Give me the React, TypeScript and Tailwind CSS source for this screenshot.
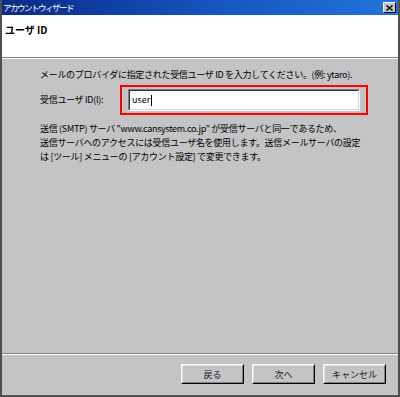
import React from "react";

const font = { fontFamily: '"Noto Sans CJK JP", "Noto Sans", sans-serif' };

function Btn({ label }: { label: string }) {
  return (
    <div className="h-[20px] w-[63px] border border-t-white border-l-white border-r-black border-b-black bg-[#c4c3c5]">
      <div className="flex h-full w-full items-center justify-center border border-t-[#e4e4e4] border-l-[#e4e4e4] border-r-[#808080] border-b-[#808080] text-[9px] leading-none text-[#202020]">
        {label}
      </div>
    </div>
  );
}

export default function App() {
  return (
    <div
      className="flex h-[397px] w-[400px] flex-col overflow-hidden border-l-2 border-r-2 border-b-2 border-l-[#505050] border-r-[#505050] border-b-[#505050] bg-[#c4c3c5]"
      style={font}
    >
      {/* title bar */}
      <div className="flex h-[15px] shrink-0 items-center justify-between bg-gradient-to-r from-[#0a2a86] via-[#1452bc] to-[#2274dc] pl-[1px] pr-[2px]">
        <span className="text-[8.5px] leading-none tracking-[-1.5px] text-white">アカウントウィザード</span>
        <div className="flex h-[11px] w-[13px] items-center justify-center border border-t-white border-l-white border-r-black border-b-black bg-[#c4c3c5]">
          <svg width="7" height="6" viewBox="0 0 7 6">
            <path d="M0.5 0.5 L6.5 5.5 M6.5 0.5 L0.5 5.5" stroke="black" strokeWidth="1.5" />
          </svg>
        </div>
      </div>

      {/* header */}
      <div className="flex h-[42px] shrink-0 items-start bg-white pl-[3px] pt-[10px]">
        <span className="text-[10px] font-bold leading-[10px] text-black">ユーザ ID</span>
      </div>
      <div className="h-px shrink-0 bg-[#808080]" />
      <div className="h-px shrink-0 bg-white" />

      {/* body */}
      <div className="flex flex-1 flex-col pl-[38px] pt-[9px] text-[9px] leading-[14px] text-black">
        <div className="tracking-[-0.3px]">
          メールのプロバイダに指定された受信ユーザ ID を入力してください。(例: ytaro).
        </div>
        <div className="mt-[3px] flex items-center">
          <div className="w-[80px] tracking-[-0.3px]">受信ユーザ ID(I):</div>
          <div className="flex h-[30px] w-[248px] items-center border-2 border-[#ff0000] px-[6px]">
            <div className="h-[22px] w-full border border-t-[#808080] border-l-[#808080] border-r-white border-b-white">
              <div className="flex h-full w-full items-center border border-t-[#303030] border-l-[#303030] border-r-[#d8d8d8] border-b-[#d8d8d8] bg-white pl-[2px] text-[9px]">
                <span>user</span>
                <span className="ml-px inline-block h-[11px] w-px bg-black" />
              </div>
            </div>
          </div>
        </div>
        <div className="mt-[7px] tracking-[-0.3px]">
          <div>送信 (SMTP) サーバ "www.cansystem.co.jp" が受信サーバと同一であるため、</div>
          <div>送信サーバへのアクセスには受信ユーザ名を使用します。送信メールサーバの設定</div>
          <div>は [ツール] メニューの [アカウント設定] で変更できます。</div>
        </div>
      </div>

      {/* bottom separator */}
      <div className="h-px shrink-0 bg-[#808080]" />
      <div className="h-px shrink-0 bg-white" />

      {/* buttons */}
      <div className="flex h-[40px] shrink-0 items-start justify-end gap-[8px] pr-[12px] pt-[9px]">
        <Btn label="戻る" />
        <Btn label="次へ" />
        <Btn label="キャンセル" />
      </div>
    </div>
  );
}
